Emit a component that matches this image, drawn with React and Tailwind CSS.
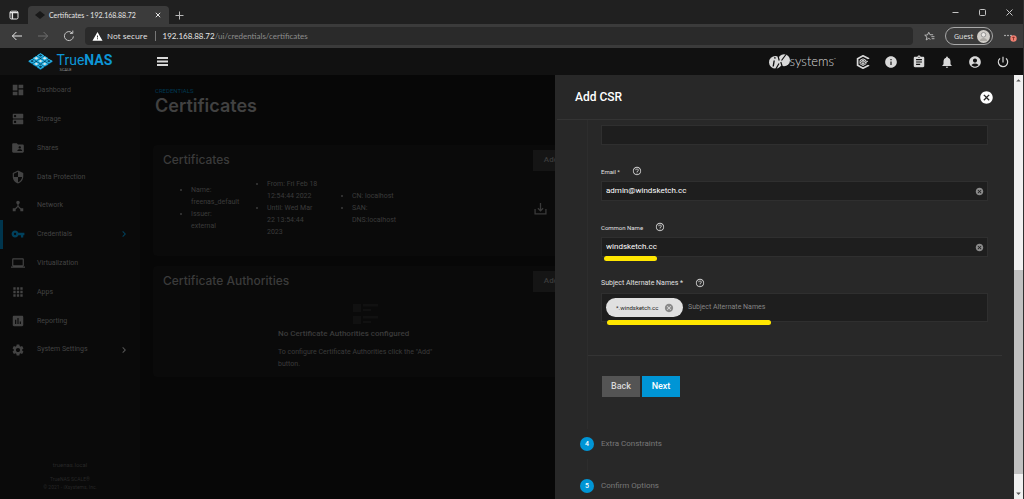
import React from "react";
import {
  MdDashboard, MdDns, MdFolderShared, MdSecurity, MdDeviceHub, MdVpnKey, MdLaptop, MdApps,
  MdAssessment, MdSettings, MdChevronRight, MdHelpOutline, MdCancel, MdInfo, MdAssignment,
  MdNotifications, MdAccountCircle, MdPowerSettingsNew, MdWarning, MdArrowDropUp, MdArrowDropDown,
} from "react-icons/md";

const NAV = [
  { label: "Dashboard", Icon: MdDashboard },
  { label: "Storage", Icon: MdDns },
  { label: "Shares", Icon: MdFolderShared },
  { label: "Data Protection", Icon: MdSecurity },
  { label: "Network", Icon: MdDeviceHub },
  { label: "Credentials", Icon: MdVpnKey, active: true, more: true },
  { label: "Virtualization", Icon: MdLaptop },
  { label: "Apps", Icon: MdApps },
  { label: "Reporting", Icon: MdAssessment },
  { label: "System Settings", Icon: MdSettings, more: true },
];

function Stroke({ children, className, viewBox = "0 0 12 12", width = 1 }) {
  return (
    <svg viewBox={viewBox} className={className} fill="none" stroke="currentColor" strokeWidth={width} aria-hidden="true">
      {children}
    </svg>
  );
}

function BrowserChrome() {
  return (
    <div className="shrink-0 font-['Open_Sans',sans-serif] text-[#e6e6e6]">
      <div className="flex h-6 items-end bg-[#202020]">
        <button aria-label="Tab actions" className="flex h-[18px] w-7 items-center justify-center">
          <Stroke className="size-[10px]" viewBox="0 0 10 10">
            <rect x="1" y="1.2" width="8" height="7.8" rx="1.4" />
            <path d="M1 2.6h8M3.4 3v6" strokeWidth="1.4" />
          </Stroke>
        </button>
        <div className="flex h-[18px] w-[141px] items-center rounded-t bg-[#3b3b3b] pl-[7px] pr-2">
          <svg viewBox="0 0 10 8" className="h-2 w-[10px]" fill="#191919" aria-hidden="true">
            <path d="M5 0l5 4-5 4-5-4z" />
          </svg>
          <span className="ml-1 flex-1 whitespace-nowrap font-['Lato',sans-serif] text-[7px] leading-none">Certificates - 192.168.88.72</span>
          <button aria-label="Close tab">
            <Stroke className="size-[6px]" viewBox="0 0 6 6"><path d="M.8.8l4.4 4.4M5.2.8L.8 5.2" /></Stroke>
          </button>
        </div>
        <button aria-label="New tab" className="ml-1.5 flex h-[18px] items-center text-[#b8b8b8]">
          <Stroke className="size-[9px]" viewBox="0 0 9 9"><path d="M4.5.5v8M.5 4.5h8" /></Stroke>
        </button>
        <div className="ml-auto flex h-6 items-center gap-5 pr-2.5 text-[#c4c4c4]">
          <button aria-label="Minimize"><Stroke className="size-[7px]" viewBox="0 0 7 7"><path d="M.5 3.5h6" /></Stroke></button>
          <button aria-label="Maximize"><Stroke className="size-[7px]" viewBox="0 0 7 7"><rect x=".5" y=".5" width="6" height="6" rx="1" /></Stroke></button>
          <button aria-label="Close window"><Stroke className="size-[7px]" viewBox="0 0 7 7"><path d="M.5.5l6 6M6.5.5l-6 6" /></Stroke></button>
        </div>
      </div>
      <div className="flex h-6 items-center bg-[#3b3b3b] pl-[11px] pr-1.5">
        <div className="flex items-center gap-3.5">
          <button aria-label="Back"><Stroke className="size-3"><path d="M11 6H1.4M5.4 2L1.4 6l4 4" /></Stroke></button>
          <button aria-label="Forward" className="text-[#6f6f6f]"><Stroke className="size-3"><path d="M1 6h9.6M6.6 2l4 4-4 4" /></Stroke></button>
          <button aria-label="Reload" className="text-[#c4c4c4]"><Stroke className="size-3"><path d="M10.4 6.4A4.5 4.5 0 1 1 9 2.8M9.8.6v2.8H7" /></Stroke></button>
        </div>
        <div className="ml-[10px] flex h-[18px] flex-1 items-center rounded-sm bg-[#2a2a2a] pl-[7px] text-[8px] leading-none">
          <MdWarning className="size-[11px] text-white" />
          <span className="ml-1 whitespace-nowrap">Not secure</span>
          <span className="mx-[7px] h-[10px] w-px bg-[#777]" />
          <span className="whitespace-nowrap font-['Lato',sans-serif] text-[#8d8d8d]"><span className="text-[#e6e6e6]">192.168.88.72</span>/ui/credentials/certificates</span>
        </div>
        <div className="ml-[11px] flex items-center">
          <button aria-label="Favorites" className="text-[#c0c0c0]">
            <Stroke className="size-[11px]">
              <path d="M7 9.2L5.2 8 2.4 9.8l.8-3.2L.8 4.6l3-.3L5.2 1.4l1.3 2.7H10M8 6.2h3.4M8.4 8.4h3" />
            </Stroke>
          </button>
          <button className="ml-2.5 flex h-[18px] w-12 items-center justify-between rounded-full border border-[#a8a8a8] pl-2 pr-0.5 text-[7px] leading-none">
            Guest
            <svg viewBox="0 0 13 13" className="size-[13px]" aria-hidden="true">
              <circle cx="6.5" cy="6.5" r="6.5" fill="#d0cdc8" />
              <circle cx="6.5" cy="4.8" r="2.3" fill="#e9e7e4" stroke="#858585" strokeWidth=".8" />
              <path d="M2.8 11c.4-2.2 1.800-3 3.700-3s3.300.8 3.700 3" fill="#aaa7a2" />
            </svg>
          </button>
          <button aria-label="Settings and more" className="ml-2.5">
            <svg viewBox="0 0 14 12" className="h-3 w-3.5" aria-hidden="true">
              <g fill="#cfcfcf"><circle cx="2" cy="5.500" r=".8" /><circle cx="5" cy="5.500" r=".8" /><circle cx="8" cy="5.500" r=".8" /></g>
              <circle cx="10.500" cy="8.500" r="3.200" fill="#f08072" />
              <path d="M10.500 10.300V7M9.300 8l1.200-1.200L11.700 8" stroke="#6a2018" strokeWidth=".7" fill="none" />
            </svg>
          </button>
        </div>
      </div>
    </div>
  );
}

const TILES = [0, 1, 2].flatMap((i) => [0, 1, 2].map((j) => ({ x: 12.5 + (i - j) * 4.2, y: 2.5 + (i + j) * 2.8, mid: i === 1 || j === 1 })));

function TrueNasLogo() {
  return (
    <a href="#home" aria-label="TrueNAS SCALE" className="flex items-center gap-1 leading-none text-[#0d95d5]">
      <svg viewBox="0 0 25 17" className="h-[17px] w-[25px]" aria-hidden="true">
        {TILES.map((t) => (
          <g key={`${t.x}-${t.y}`}>
            <path d={`M${t.x - 3.6} ${t.y}l3.600-2.200 3.600 2.200v1l-3.600 2.200-3.600-2.200z`} fill="#0d84bd" />
            <path d={`M${t.x - 3.6} ${t.y}l3.600-2.200 3.600 2.200-3.600 2.200z`} fill="#31beec" />
            <path d={`M${t.x - 1.9} ${t.y}l1.900-1.200 1.900 1.200-1.900 1.200z`} fill={t.mid ? "#e3e3e3" : "#083f5e"} />
            <path d={`M${t.x - 3.8} ${t.y + 1}l3.800 2.300 3.800-2.300`} fill="none" stroke="#111" strokeWidth=".5" />
          </g>
        ))}
      </svg>
      <span className="flex flex-col pt-0.5">
        <span className="text-[14px] leading-[14px]">True<b className="font-bold">NAS</b></span>
        <span className="pl-[3px] text-[4px] leading-[5px] text-[#9a9a9a]">SCALE</span>
      </span>
    </a>
  );
}

function TopBar() {
  return (
    <header className="flex h-[27px] shrink-0 items-center bg-[#111] text-[#d9d9d9]">
      <div className="flex w-[140px] justify-center"><TrueNasLogo /></div>
      <button aria-label="Toggle menu" className="ml-[17px]">
        <Stroke className="h-[9px] w-[11px]" viewBox="0 0 11 9" width={1.8}><path d="M0 1h11M0 4.500h11M0 8h11" /></Stroke>
      </button>
      <div className="ml-auto flex items-center gap-3.5 pr-[13px]">
        <a href="#ix" aria-label="iXsystems" className="mr-1.5 flex items-center">
          <svg viewBox="0 0 21 15" className="h-[15px] w-[21px]" aria-hidden="true">
            <ellipse cx="6.500" cy="8.200" rx="6.500" ry="6.300" fill="#d9d9d9" />
            <ellipse cx="15" cy="6.200" rx="6" ry="6" fill="#d9d9d9" />
            <path d="M5.200 6.500L4.200 12.500M6 3.200L5.800 4.700" stroke="#111" strokeWidth="1.400" />
            <path d="M8.800 1l1.400 5.500M11.800 8l2 6.500M17 .5l-4.500 6M10 9.500L6.800 15" stroke="#111" strokeWidth="1.200" />
          </svg>
          <span className="font-['Lato',sans-serif] text-[13px] font-light leading-none">systems</span>
          <span className="self-start pt-1 text-[3px] leading-none">™</span>
        </a>
        <button aria-label="TrueCommand">
          <svg viewBox="0 0 14 14" className="size-3.5" aria-hidden="true">
            <path d="M12.400 4V3.600L7 .8 1.600 3.800v6.400L7 13.200l5.400-2.800V10" fill="none" stroke="#d9d9d9" strokeWidth="1.700" />
            <path d="M4 5.400l3-1.600 3 1.600v3.400L7 10.500 4 8.800zM4 5.400l3 1.700 3-1.700M7 7.100v3.400M5.500 4.600l3 1.700M8.500 4.600l-3 1.700M4 7.200l3 1.700 5-2.800" fill="none" stroke="#d9d9d9" strokeWidth=".9" />
          </svg>
        </button>
        <button aria-label="Information"><MdInfo className="size-3.5" /></button>
        <button aria-label="Jobs"><MdAssignment className="size-3.5" /></button>
        <button aria-label="Alerts"><MdNotifications className="size-3.5" /></button>
        <button aria-label="Account"><MdAccountCircle className="size-3.5" /></button>
        <button aria-label="Power"><MdPowerSettingsNew className="size-3.5" /></button>
      </div>
    </header>
  );
}

function Sidebar() {
  return (
    <aside className="flex w-[140px] shrink-0 flex-col bg-[#0a0a0a] pt-px text-[#434343]">
      <nav className="grid h-72 grid-rows-10">
        {NAV.map(({ label, Icon, active, more }) => (
          <a
            key={label}
            href={`#${label}`}
            className={`flex items-center border-l-[3px] pl-2 pr-2.5 text-[7px] ${active ? "border-[#00354d]" : "border-transparent"}`}
          >
            <Icon className={`size-3.5 ${active ? "text-[#00405c]" : ""}`} />
            <span className="ml-3 flex-1">{label}</span>
            {more && <MdChevronRight className={`size-3 ${active ? "text-[#00405c]" : "text-[#555]"}`} />}
          </a>
        ))}
      </nav>
      <footer className="mt-auto pb-2 text-center text-[5px] leading-2 text-[#272727]">
        <p className="mb-1.5 text-[6px]">truenas.local</p>
        <p>TrueNAS SCALE®</p>
        <p>© 2021 - iXsystems, Inc.</p>
      </footer>
    </aside>
  );
}

function Card({ title, children }) {
  return (
    <section className="h-[111px] rounded-sm bg-[#0a0a0a]">
      <div className="flex h-[30px] items-center justify-between pl-2.5 pr-2.5">
        <h2 className="font-['Inter',sans-serif] text-[12px] font-medium text-[#3b3b3b]">{title}</h2>
        <button className="h-[21px] w-9 bg-[#151515] text-[8px] font-medium text-[#3b3b3b]">Add</button>
      </div>
      {children}
    </section>
  );
}

function CertificatesPage() {
  return (
    <main className="min-w-0 flex-1 bg-[#070707] pl-[13px] pr-3">
      <div className="h-[70px] pl-0.5 pt-3">
        <p className="text-[6px] leading-[7px] text-[#003850]">CREDENTIALS</p>
        <h1 className="font-['Inter',sans-serif] text-[18px] font-semibold leading-6 text-[#414141]">Certificates</h1>
      </div>
      <div className="grid grid-cols-2 gap-1.5">
        <div className="flex flex-col gap-2.5">
          <Card title="Certificates">
            <div className="flex h-[66px] items-center text-[7px] leading-3 text-[#3b3b3b]">
              <ul className="ml-[38px] w-[54px] list-disc">
                <li>Name: <span className="block">freenas_default</span></li>
                <li>Issuer: <span className="block">external</span></li>
              </ul>
              <ul className="ml-[22px] w-[54px] list-disc">
                <li>From: Fri Feb 18 12:54:44 2022</li>
                <li>Until: Wed Mar 22 13:54:44 2023</li>
              </ul>
              <ul className="ml-[31px] w-[52px] list-disc">
                <li>CN: localhost</li>
                <li>SAN: DNS:localhost</li>
              </ul>
              <button aria-label="Download" className="ml-auto mr-8 text-[#3a3a3a]">
                <Stroke className="size-[13px]" width={1.2}><path d="M1 6.500V11h10V6.500M6 1v7M3.600 5.800L6 8.200l2.400-2.400" /></Stroke>
              </button>
            </div>
          </Card>
          <Card title="Certificate Authorities">
            <div className="mx-auto mt-2 w-[176px] text-[#3b3b3b]">
              <svg viewBox="0 0 26 20" className="mx-auto h-5 w-[26px]" fill="#111" aria-hidden="true">
                <path d="M0 0h8v8H0zM10 0h15v2.500H10zM10 5h8v2H10zM0 12h8v8H0zM10 12h15v2.500H10zM10 17h8v2H10z" />
              </svg>
              <h3 className="mt-0.5 whitespace-nowrap text-[8px] font-medium leading-4">No Certificate Authorities configured</h3>
              <p className="mt-1 text-[7px] leading-3">To configure Certificate Authorities click the "Add" button.</p>
            </div>
          </Card>
        </div>
      </div>
    </main>
  );
}

function FieldLabel({ id, size = "text-[6px]", children }) {
  return (
    <div className="mt-4 flex h-5 items-center">
      <label htmlFor={id} className={`${size} text-[#e0e0e0]`}>{children}</label>
      <button type="button" aria-label="Help" className="ml-3"><MdHelpOutline className="size-[10px] text-[#cfcfcf]" /></button>
    </div>
  );
}

function TextField({ id, label, value }) {
  return (
    <>
      <FieldLabel id={id}>{label}</FieldLabel>
      <div className="flex h-5 items-center border border-[#2f2f2f] bg-[#1e1e1e] pl-1 pr-[3px]">
        <input id={id} defaultValue={value} className="min-w-0 flex-1 bg-transparent text-[8px] text-white outline-none" />
        <button type="button" aria-label="Clear"><MdCancel className="size-[9px] text-[#8a8a8a]" /></button>
      </div>
    </>
  );
}

function Step({ number, children }) {
  return (
    <li>
      <button type="button" className="flex items-center gap-[7px] text-[8px] leading-[14px] text-[#787878]">
        <span className="size-3.5 rounded-full bg-[#0095d5] text-center text-[7px] font-medium text-white">{number}</span>
        {children}
      </button>
    </li>
  );
}

function AddCsrPanel() {
  return (
    <section aria-label="Add CSR" className="absolute inset-y-0 right-0 flex w-[468px] bg-[#282828]">
      <div className="flex min-w-0 flex-1 flex-col">
        <div className="mx-0.5 flex h-[45px] shrink-0 items-center justify-between border-b border-[#343434] pl-[18px] pr-[18px]">
          <h2 className="text-[12px] font-medium text-white">Add CSR</h2>
          <button type="button" aria-label="Close panel"><MdCancel className="size-[15px] text-white" /></button>
        </div>
        <form className="ml-8 mr-3">
          <div className="border-l border-[#2d2d2d] pb-8 pt-[5px]">
            <div className="pl-[13px] pr-[14px]">
              <div className="h-5 border border-[#2f2f2f] bg-[#1e1e1e]">
                <input aria-label="Organization" className="block h-full w-full bg-transparent px-1 text-[8px] text-white outline-none" />
              </div>
              <TextField id="email" label="Email *" value="admin@windsketch.cc" />
              <div className="relative">
                <TextField id="common-name" label="Common Name" value="windsketch.cc" />
                <span className="absolute -bottom-1 left-[3px] h-[5px] w-[53px] rounded-full bg-[#ffe600]" />
              </div>
              <FieldLabel id="san" size="text-[7px]">Subject Alternate Names *</FieldLabel>
              <div className="relative flex h-[29px] items-center border border-[#2f2f2f] bg-[#1e1e1e] px-1">
                <span className="flex h-[19px] w-[77px] items-center justify-between rounded-full bg-[#e0e0e0] pl-2.5 pr-[9px] text-[6px] text-[#222]">
                  *.windsketch.cc
                  <button type="button" aria-label="Remove"><MdCancel className="size-[10px] text-[#8a8a8a]" /></button>
                </span>
                <input id="san" placeholder="Subject Alternate Names" className="ml-[5px] min-w-0 flex-1 bg-transparent text-[7px] text-white outline-none placeholder:text-[#858585]" />
                <span className="absolute -bottom-1 left-[5px] h-[5px] w-[164px] rounded-full bg-[#ffe600]" />
              </div>
            </div>
            <hr className="mt-[33px] border-[#343434]" />
            <div className="mt-5 flex gap-0.5 pl-[14px]">
              <button type="button" className="h-[21px] w-[38px] bg-[#545454] text-[9px] font-medium text-[#d9d9d9]">Back</button>
              <button type="submit" className="h-[21px] w-[38px] bg-[#0095d5] text-[9px] font-medium text-white">Next</button>
            </div>
          </div>
          <ol className="-ml-[7px] mt-2 flex flex-col">
            <Step number={4}>Extra Constraints</Step>
            <li aria-hidden="true" className="my-2 ml-[7px] h-3 w-px bg-[#2d2d2d]" />
            <Step number={5}>Confirm Options</Step>
          </ol>
        </form>
      </div>
      <div aria-hidden="true" className="flex w-[9px] flex-col items-center bg-[#f0f0f0] text-[#555]">
        <MdArrowDropUp className="size-[11px] shrink-0" />
        <span className="flex-[9]" />
        <span className="w-full flex-[10] bg-[#c1c1c1]" />
        <span className="h-3.5" />
        <MdArrowDropDown className="size-[11px] shrink-0" />
      </div>
    </section>
  );
}

export default function App() {
  return (
    <div className="flex h-screen flex-col overflow-hidden border-r border-[#303030] bg-[#070707] font-['Roboto',sans-serif]">
      <BrowserChrome />
      <TopBar />
      <div className="relative flex min-h-0 flex-1">
        <Sidebar />
        <CertificatesPage />
        <AddCsrPanel />
      </div>
    </div>
  );
}
